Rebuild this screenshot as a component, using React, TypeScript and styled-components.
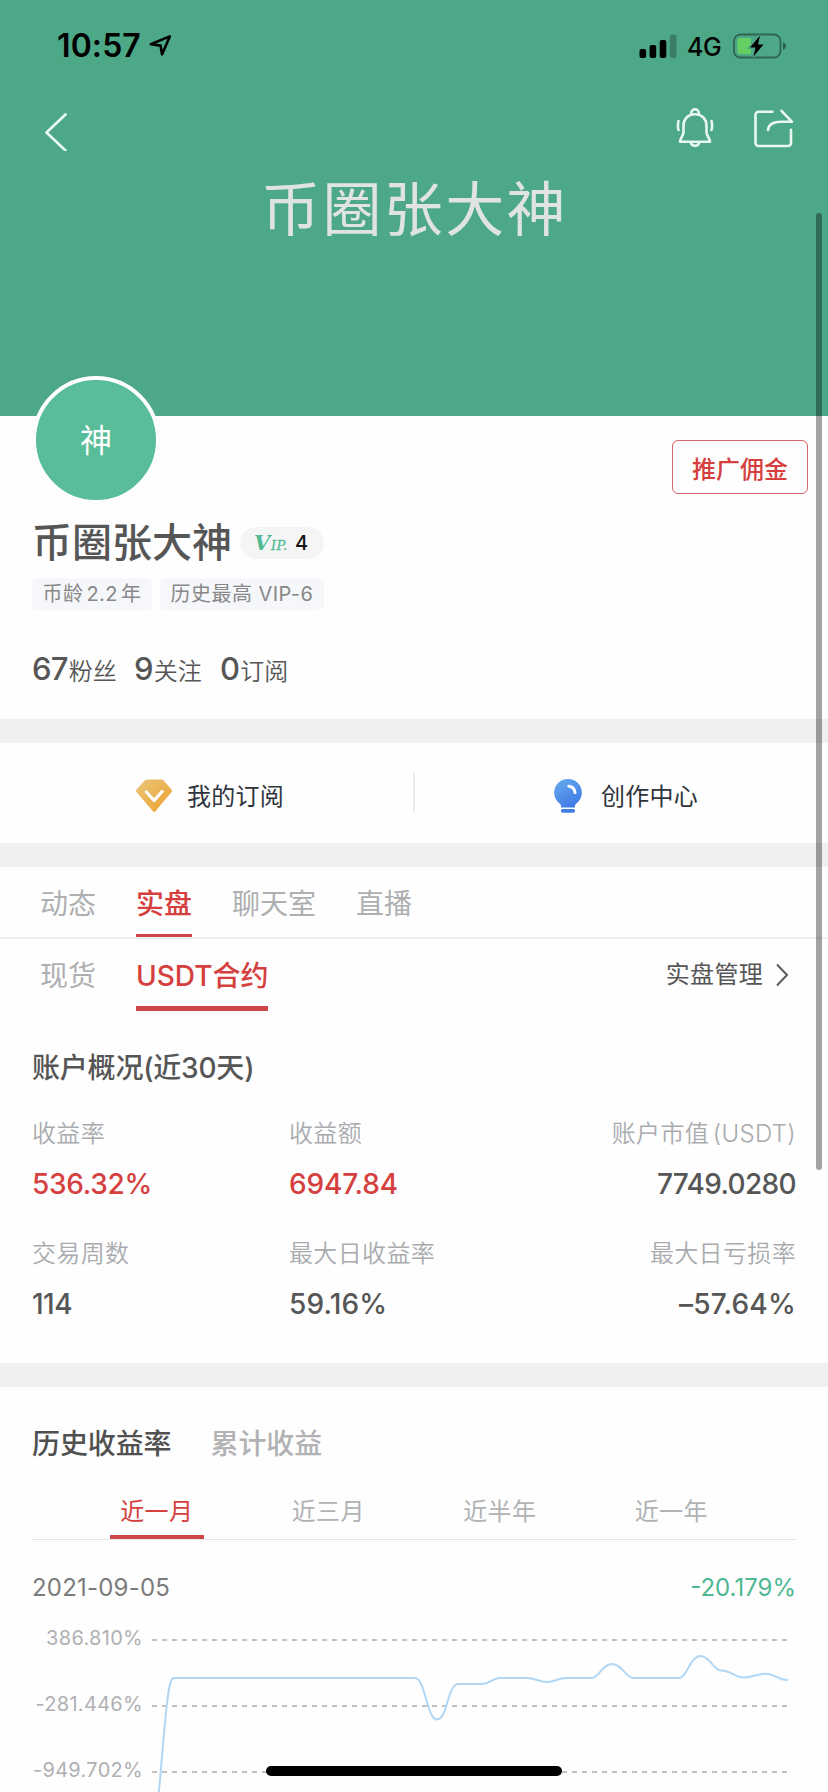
import React from 'react';
import styled, { createGlobalStyle, css } from 'styled-components';

const red = '#d5403f';

const GlobalStyle = createGlobalStyle`
  * { box-sizing: border-box; }
  html, body { margin: 0; padding: 0; background: #fefefe; }
  body {
    font-family: Inter, "Noto Sans CJK SC", sans-serif;
    color: #565656;
    overflow: hidden;
  }
`;

const Screen = styled.div`
  position: relative;
  width: 828px;
  height: 1792px;
  overflow: hidden;
  background: #fefefe;
  display: flex;
  flex-direction: column;
`;

/* ---------- header ---------- */

const Hero = styled.header`
  flex: none;
  height: 416px;
  background: #4da887;
`;

const StatusBar = styled.div`
  height: 91px;
  padding: 0 41px 0 57px;
  display: flex;
  align-items: center;
  justify-content: space-between;
  color: #000;
`;

const StatusGroup = styled.div`
  display: flex;
  align-items: center;
`;

const Clock = styled.span`
  width: 92px;
  font-size: 32px;
  line-height: 40px;
  font-weight: 600;
  letter-spacing: 0.1px;
  white-space: nowrap;
`;

const Network = styled.span`
  width: 36px;
  margin: 2px 10px 0 10px;
  font-size: 25px;
  line-height: 30px;
  font-weight: 450;
  letter-spacing: -0.3px;
`;

const NavBar = styled.nav`
  height: 75px;
  padding: 16px 34px 0 42px;
  display: flex;
  justify-content: space-between;
  align-items: flex-start;
`;

const NavActions = styled.div`
  display: flex;
  gap: 38px;
`;

const HeroTitle = styled.h1`
  margin: 6px 0 0;
  padding-left: 1px;
  text-align: center;
  font-size: 59px;
  line-height: 76px;
  font-weight: 400;
  letter-spacing: 2.3px;
  color: #e0e4e1;
`;

/* ---------- profile ---------- */

const Profile = styled.section`
  flex: none;
  position: relative;
  height: 303px;
  padding: 0 32px;
`;

const ProfileTop = styled.div`
  display: flex;
  justify-content: space-between;
  height: 98px;
  margin-right: -12px;
`;

const Avatar = styled.div`
  width: 128px;
  height: 128px;
  margin-top: -40px;
  border: 4px solid #fefefe;
  border-radius: 50%;
  background: #58bd98;
  color: #fff;
  font-size: 32px;
  line-height: 121px;
  text-align: center;
`;

const PromoteButton = styled.button`
  width: 136px;
  height: 54px;
  margin-top: 24px;
  padding: 5px 0 0;
  border: 1px solid #d4676b;
  border-radius: 6px;
  background: transparent;
  color: ${red};
  font: 500 24px/48px Inter, "Noto Sans CJK SC", sans-serif;
`;

const NameRow = styled.div`
  display: flex;
  align-items: center;
  height: 58px;
`;

const Name = styled.h2`
  margin: 0;
  width: 208px;
  font-size: 40px;
  line-height: 56px;
  font-weight: 500;
  white-space: nowrap;
`;

const VipPill = styled.div`
  width: 84px;
  height: 32px;
  border-radius: 16px;
  background: #f5f5f5;
  display: flex;
  align-items: center;
  padding-left: 14px;
`;

const VipMark = styled.span`
  display: flex;
  align-items: baseline;
  width: 41px;
  color: #4fbb94;
  font-style: italic;
  line-height: 26px;
  padding-top: 2px;
`;

const VipBig = styled.span`
  font-family: "DejaVu Serif", serif;
  font-weight: 700;
  font-size: 21px;
  width: 17px;
`;

const VipSmall = styled.span`
  font-family: "DejaVu Serif", serif;
  font-size: 13px;
  letter-spacing: 0.4px;
  -webkit-text-stroke: 0.3px #4fbb94;
`;

const VipLevel = styled.span`
  font-size: 20px;
  line-height: 32px;
  font-weight: 500;
  color: #111;
`;

const Tags = styled.div`
  display: flex;
  gap: 8px;
  margin-top: 6px;
`;

const Tag = styled.span<{ $w: number; $space: number }>`
  width: ${(p) => p.$w}px;
  height: 32px;
  border-radius: 5px;
  background: #f5f7fa;
  color: #888;
  font-size: 20px;
  font-weight: 370;
  line-height: 33px;
  letter-spacing: 0.45px;
  word-spacing: ${(p) => p.$space}px;
  text-align: center;
  white-space: nowrap;
`;

const Counts = styled.div`
  display: flex;
  margin-top: 39px;
  line-height: 40px;
`;

const Count = styled.div<{ $w: number }>`
  width: ${(p) => p.$w}px;
  font-size: 24px;
  font-weight: 350;
  white-space: nowrap;

  b {
    font-size: 31px;
    font-weight: 480;
    letter-spacing: -0.8px;
    margin-right: 1px;
  }
`;

const Band = styled.div`
  flex: none;
  height: 24px;
  background: #f0f0f0;
`;

/* ---------- shortcuts ---------- */

const Shortcuts = styled.section`
  flex: none;
  height: 100px;
  display: flex;
  align-items: center;
`;

const Shortcut = styled.div`
  flex: 1;
  display: flex;
  align-items: center;
  justify-content: center;
  gap: 14px;
  padding: 6px 0 0 5px;
  color: #30343c;
  font-size: 24px;
  line-height: 40px;
  letter-spacing: 0.3px;

  span {
    padding-top: 2px;
  }
`;

const ShortcutDivider = styled.div`
  width: 2px;
  height: 40px;
  margin: 0 -1px;
  background: #ececec;
`;

/* ---------- tabs ---------- */

const TabBar = styled.div<{ $sub?: boolean }>`
  flex: none;
  display: flex;
  gap: 40px;
  height: 72px;
  padding: 0 40px;
  ${(p) =>
    !p.$sub &&
    css`
      border-bottom: 2px solid #efefef;
    `}
`;

const Tab = styled.div<{ $active?: boolean; $bar?: number }>`
  padding-top: 17px;
  font-size: 28px;
  line-height: 40px;
  font-weight: ${(p) => (p.$active ? 480 : 400)};
  white-space: nowrap;
  color: ${(p) => (p.$active ? red : '#adafb1')};
  border-bottom: ${(p) => p.$bar ?? 3}px solid ${(p) => (p.$active ? '#cd474a' : 'transparent')};
`;

const ManageLink = styled.div`
  margin: 0 -10px 0 auto;
  padding-top: 16px;
  display: flex;
  align-items: center;
  height: 56px;
  font-size: 24px;
  line-height: 40px;
  letter-spacing: 0.3px;
  gap: 13px;
`;

/* ---------- account overview ---------- */

const Overview = styled.section`
  flex: none;
  height: 352px;
  padding: 37px 32px 0;
`;

const OverviewTitle = styled.h3`
  margin: 0 0 26px;
  font-size: 28px;
  line-height: 40px;
  font-weight: 480;
  letter-spacing: -0.2px;
`;

const MetricGrid = styled.div`
  display: grid;
  grid-template-columns: 257px 1fr auto;
  row-gap: 30px;
`;

const Metric = styled.div<{ $right?: boolean }>`
  height: 90px;
  text-align: ${(p) => (p.$right ? 'right' : 'left')};
`;

const MetricLabel = styled.div`
  font-size: 24px;
  line-height: 40px;
  letter-spacing: 0.35px;
  word-spacing: -3.5px;
  font-weight: 360;
  color: #a9abae;
`;

const MetricValue = styled.div<{ $up?: boolean; $track: number }>`
  margin-top: 10px;
  font-size: 28px;
  line-height: 40px;
  font-weight: 480;
  letter-spacing: ${(p) => p.$track}px;
  color: ${(p) => (p.$up ? red : '#565656')};
`;

/* ---------- history ---------- */

const History = styled.section`
  flex: none;
  height: 405px;
  padding: 37px 32px 0;
`;

const HistoryTabs = styled.div`
  display: flex;
  gap: 39px;
`;

const HistoryTab = styled.div<{ $active?: boolean }>`
  font-size: 28px;
  line-height: 40px;
  font-weight: 500;
  letter-spacing: -0.1px;
  color: ${(p) => (p.$active ? '#505050' : '#b2b2b5')};
`;

const Periods = styled.div`
  display: flex;
  justify-content: center;
  height: 76px;
  border-bottom: 1px solid #e4e4e6;
`;

const Period = styled.div<{ $active?: boolean }>`
  width: 171.5px;
  display: flex;
  justify-content: center;

  span {
    width: 94px;
    padding-top: 28px;
    text-align: center;
    font-size: 24px;
    line-height: 40px;
    font-weight: 370;
    letter-spacing: 0.3px;
    white-space: nowrap;
    color: ${(p) => (p.$active ? red : '#b0b2b4')};
    border-bottom: 4px solid ${(p) => (p.$active ? '#cd474a' : 'transparent')};
  }
`;

const Reading = styled.div`
  display: flex;
  justify-content: space-between;
  margin-top: 28px;
  font-size: 24px;
  line-height: 40px;
  color: #7b7b7b;
`;

const ReadingDate = styled.span`
  letter-spacing: 0.2px;
`;

const ReadingValue = styled.span`
  color: #4fb893;
`;

const Chart = styled.div`
  display: flex;
  height: 184px;
`;

const Axis = styled.div`
  width: 111px;
  margin-right: -1px;
  padding-top: 10px;
  display: flex;
  flex-direction: column;
  gap: 26px;
  text-align: right;
  font-size: 20px;
  line-height: 40px;
  letter-spacing: 0.3px;
  color: #b0b0b3;
`;

/* ---------- system overlays ---------- */

const ScrollThumb = styled.div`
  position: absolute;
  left: 816px;
  top: 213px;
  width: 6px;
  height: 957px;
  border-radius: 3px;
  background: rgba(0, 0, 0, 0.36);
`;

const HomeIndicator = styled.div`
  position: absolute;
  left: 266px;
  top: 1766px;
  width: 296px;
  height: 10px;
  border-radius: 5px;
  background: #000;
`;

const LocationIcon = () => (
  <svg width="24" height="24" viewBox="0 0 24 24" fill="none" stroke="#000" strokeWidth="2.6" strokeLinejoin="round">
    <path d="M1.800 10.200 20.800 2.400 13 20.400 11.600 11.600Z" />
  </svg>
);

const SignalIcon = () => (
  <svg width="38" height="24" viewBox="0 0 38 24">
    <rect x="0.5" y="15" width="6.6" height="9" rx="2" />
    <rect x="10.6" y="11" width="6.6" height="13" rx="2" />
    <rect x="20.7" y="6" width="6.6" height="18" rx="2" />
    <rect x="30.8" y="0.5" width="6.6" height="23.5" rx="2" opacity="0.25" />
  </svg>
);

const BatteryIcon = () => (
  <svg width="54" height="26" viewBox="0 0 54 26" fill="none">
    <rect x="1" y="1.5" width="46.5" height="23" rx="6.5" stroke="#000" strokeOpacity="0.4" strokeWidth="1.8" />
    <path d="M50 9.5c2 .7 3 1.9 3 3.5s-1 2.800-3 3.500Z" fill="#000" fillOpacity="0.45" />
    <path d="M7.500 5H18v16H7.500Q4.500 21 4.500 18V8Q4.500 5 7.500 5Z" fill="#66cf62" />
    <path d="M27 2.500 17 14.500h5.500L20.500 23.500 30.500 11.500h-5.500Z" fill="#000" stroke="#4da887" strokeWidth="3" />
    <path d="M27 2.500 17 14.500h5.500L20.500 23.500 30.500 11.500h-5.500Z" fill="#000" />
  </svg>
);

const BackIcon = () => (
  <svg width="28" height="44" viewBox="0 0 28 44" fill="none" stroke="#e9fbf3" strokeWidth="2.600" strokeLinecap="round" strokeLinejoin="round">
    <path d="M23.500 7.500 4.500 25.500l19 18" />
  </svg>
);

const BellIcon = () => (
  <svg width="38" height="44" viewBox="0 0 38 44" fill="none" stroke="#e9f7f1" strokeWidth="2.600" strokeLinecap="round" strokeLinejoin="round">
    <path d="M15.200 7.200V6a3.800 3.800 0 0 1 7.600 0v1.200" />
    <path d="M19 7.200c-7 0-11.500 5-11.500 11.500v6c0 4.500-3.500 6.300-3.500 10h30c0-3.700-3.500-5.500-3.500-10v-6C30.500 12.200 26 7.200 19 7.200Z" />
    <path d="M14.800 35.500a4.300 4.300 0 0 0 8.400 0" />
    <path d="M2.500 14q-1.200 4.500 0 9M35.500 14q1.200 4.500 0 9" />
  </svg>
);

const ShareIcon = () => (
  <svg width="42" height="44" viewBox="0 0 42 44" fill="none" stroke="#e9f7f1" strokeWidth="2.600" strokeLinecap="round" strokeLinejoin="round">
    <path d="M20.500 4.700H6.500a3 3 0 0 0-3 3V36a3 3 0 0 0 3 3h29.500a3 3 0 0 0 3-3V22.800" />
    <path d="M29.500 3.800 40 14.800H29.500C20.500 14.800 16.500 18 16 23" />
  </svg>
);

const DiamondIcon = () => (
  <svg width="38" height="36" viewBox="0 0 38 36">
    <defs>
      <linearGradient id="gold" x1="0" y1="0" x2="1" y2="1">
        <stop offset="0" stopColor="#e8c67c" />
        <stop offset="1" stopColor="#efa02c" />
      </linearGradient>
    </defs>
    <path d="M12 1.500h14.500q1.200 0 2 .8l8.300 9.700q.8.900 0 1.800L20.200 33.500q-1 1.200-2 0L1.200 13.800q-.8-.9 0-1.800l8.500-9.500q1-1 2.300-1Z" fill="url(#gold)" />
    <path d="m10.500 13 8.600 9.500L28 12.500" fill="none" stroke="#fff" strokeWidth="3.200" strokeLinejoin="round" />
  </svg>
);

const BulbIcon = () => (
  <svg width="38" height="36" viewBox="0 0 38 36">
    <defs>
      <linearGradient id="blue" x1="0.200" y1="0" x2="0.800" y2="1">
        <stop offset="0" stopColor="#64a9ee" />
        <stop offset="1" stopColor="#3c78e4" />
      </linearGradient>
    </defs>
    <path d="M19 1C11 1 5.200 7 5.200 14.600c0 5.400 2.700 8.900 5.600 11.200.9.700 1.300 1.600 1.300 2.700v1h13.800v-1c0-1.100.4-2 1.300-2.700 2.900-2.300 5.600-5.800 5.600-11.200C32.800 7 27 1 19 1Z" fill="url(#blue)" />
    <rect x="12" y="31" width="14" height="3.700" rx="1.600" fill="#3f7de2" />
    <path d="M19.800 8.300q5.700.7 6.200 6.300" fill="none" stroke="#fff" strokeWidth="3" strokeLinecap="round" />
  </svg>
);

const ChevronIcon = () => (
  <svg width="22" height="24" viewBox="0 0 22 24" fill="none" stroke="#5c5c5c" strokeWidth="2">
    <path d="m1 1.500 10 10.500L1 22.500" />
  </svg>
);

const ChartPlot = () => (
  <svg width="648" height="184" viewBox="142 1608 648 184" fill="none">
    {[1640, 1706, 1772].map((y) => (
      <path key={y} d={`M152 ${y}H787`} stroke="#adadad" strokeWidth="1.500" strokeDasharray="5 5" />
    ))}
    <path
      d="M158.500 1794C160 1784 164 1728 167 1704C168.500 1690 170 1678 174 1678H415C425 1678 427 1719.500 437 1719.500C448 1719.500 447 1684 458.500 1684H483C490 1684 492 1678 500 1678H527C535 1678 539 1682 547 1682C555 1682 558 1678 566 1678H592C599 1678 602 1664 612 1664C622 1664 626 1678 633 1678H679C687 1678 690 1656 700.500 1656C710 1656 713 1670 721 1670.500C732 1671 735 1677.500 744 1677.500C752 1677.500 757 1673.700 766 1673.700C775 1673.700 777 1680 788 1680"
      stroke="#b1d7f5"
      strokeWidth="2"
    />
  </svg>
);

type MetricItem = { label: string; value: string; track: number; up?: boolean; right?: boolean };

const metrics: MetricItem[] = [
  { label: '收益率', value: '536.32%', track: -0.3, up: true },
  { label: '收益额', value: '6947.84', track: -0.15, up: true },
  { label: '账户市值 (USDT)', value: '7749.0280', track: -0.65, right: true },
  { label: '交易周数', value: '114', track: -0.5 },
  { label: '最大日收益率', value: '59.16%', track: 0.15 },
  { label: '最大日亏损率', value: '–57.64%', track: 0.25, right: true },
];

export default function App() {
  return (
    <>
      <GlobalStyle />
      <Screen>
        <Hero>
          <StatusBar>
            <StatusGroup>
              <Clock>10:57</Clock>
              <LocationIcon />
            </StatusGroup>
            <StatusGroup>
              <SignalIcon />
              <Network>4G</Network>
              <BatteryIcon />
            </StatusGroup>
          </StatusBar>
          <NavBar>
            <BackIcon />
            <NavActions>
              <BellIcon />
              <ShareIcon />
            </NavActions>
          </NavBar>
          <HeroTitle>币圈张大神</HeroTitle>
        </Hero>

        <Profile>
          <ProfileTop>
            <Avatar>神</Avatar>
            <PromoteButton>推广佣金</PromoteButton>
          </ProfileTop>
          <NameRow>
            <Name>币圈张大神</Name>
            <VipPill>
              <VipMark>
                <VipBig>V</VipBig>
                <VipSmall>IP.</VipSmall>
              </VipMark>
              <VipLevel>4</VipLevel>
            </VipPill>
          </NameRow>
          <Tags>
            <Tag $w={120} $space={-3}>币龄 2.2 年</Tag>
            <Tag $w={164} $space={0}>历史最高 VIP-6</Tag>
          </Tags>
          <Counts>
            <Count $w={102}><b>67</b>粉丝</Count>
            <Count $w={86}><b>9</b>关注</Count>
            <Count $w={80}><b>0</b>订阅</Count>
          </Counts>
        </Profile>

        <Band />

        <Shortcuts>
          <Shortcut>
            <DiamondIcon />
            <span>我的订阅</span>
          </Shortcut>
          <ShortcutDivider />
          <Shortcut>
            <BulbIcon />
            <span>创作中心</span>
          </Shortcut>
        </Shortcuts>

        <Band />

        <TabBar>
          <Tab>动态</Tab>
          <Tab $active>实盘</Tab>
          <Tab>聊天室</Tab>
          <Tab>直播</Tab>
        </TabBar>
        <TabBar $sub>
          <Tab $bar={5}>现货</Tab>
          <Tab $bar={5} $active>USDT合约</Tab>
          <ManageLink>
            实盘管理
            <ChevronIcon />
          </ManageLink>
        </TabBar>

        <Overview>
          <OverviewTitle>账户概况(近30天)</OverviewTitle>
          <MetricGrid>
            {metrics.map((m) => (
              <Metric key={m.label} $right={m.right}>
                <MetricLabel>{m.label}</MetricLabel>
                <MetricValue $up={m.up} $track={m.track}>{m.value}</MetricValue>
              </Metric>
            ))}
          </MetricGrid>
        </Overview>

        <Band />

        <History>
          <HistoryTabs>
            <HistoryTab $active>历史收益率</HistoryTab>
            <HistoryTab>累计收益</HistoryTab>
          </HistoryTabs>
          <Periods>
            <Period $active><span>近一月</span></Period>
            <Period><span>近三月</span></Period>
            <Period><span>近半年</span></Period>
            <Period><span>近一年</span></Period>
          </Periods>
          <Reading>
            <ReadingDate>2021-09-05</ReadingDate>
            <ReadingValue>-20.179%</ReadingValue>
          </Reading>
          <Chart>
            <Axis>
              <span>386.810%</span>
              <span>-281.446%</span>
              <span>-949.702%</span>
            </Axis>
            <ChartPlot />
          </Chart>
        </History>

        <ScrollThumb />
        <HomeIndicator />
      </Screen>
    </>
  );
}
